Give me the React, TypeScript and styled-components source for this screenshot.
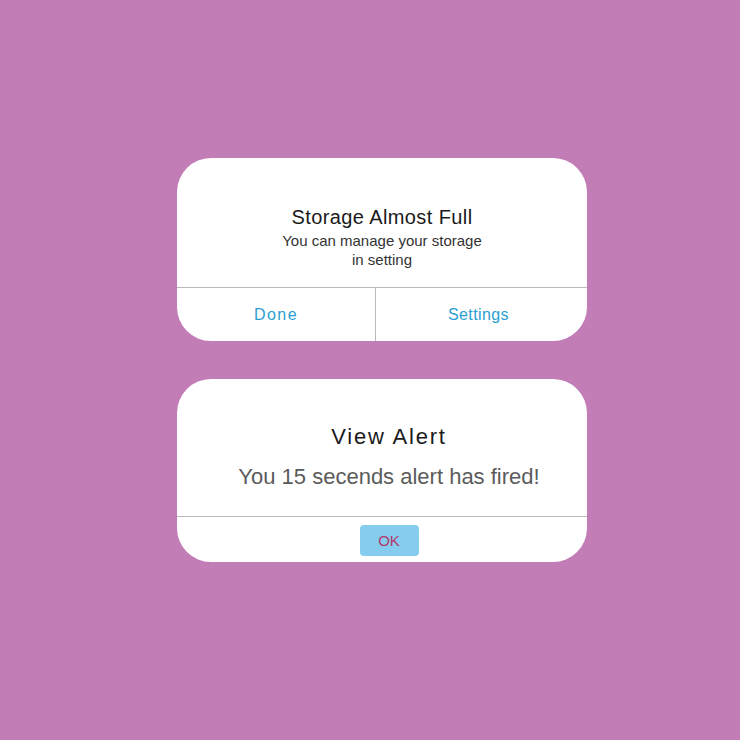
import styled, { createGlobalStyle } from "styled-components"

const GlobalStyle = createGlobalStyle`
  html, body {
    margin: 0;
    padding: 0;
    background: #c27db7;
  }
  body {
    font-family: "Liberation Sans", Arial, sans-serif;
  }
`

const Page = styled.div`
  width: 740px;
  height: 740px;
  box-sizing: border-box;
  padding-top: 158px;
  padding-left: 177px;
  display: flex;
  flex-direction: column;
  gap: 38px;
  background: #c27db7;
`

const Card = styled.div<{ $height: number }>`
  width: 410px;
  height: ${(props) => props.$height}px;
  background: #ffffff;
  border-radius: 34px;
  overflow: hidden;
  display: flex;
  flex-direction: column;
`

const Body = styled.div<{ $height: number; $pad: number; $shift?: number }>`
  height: ${(props) => props.$height}px;
  box-sizing: border-box;
  padding-top: ${(props) => props.$pad}px;
  padding-left: ${(props) => props.$shift ?? 0}px;
  border-bottom: 1px solid #b9b9b9;
  display: flex;
  flex-direction: column;
  align-items: center;
  text-align: center;
`

const Title = styled.div<{ $size: number; $spacing: number }>`
  font-size: ${(props) => props.$size}px;
  letter-spacing: ${(props) => props.$spacing}px;
  color: #1a1a1a;
  line-height: 1.2;
`

const Message = styled.div<{ $size: number; $gap: number }>`
  margin-top: ${(props) => props.$gap}px;
  font-size: ${(props) => props.$size}px;
  color: ${(props) => (props.$size > 18 ? "#5b5b5b" : "#333333")};
  line-height: 1.25;
`

const ActionRow = styled.div`
  flex: 1;
  display: grid;
  grid-template-columns: 199px 1fr;
`

const Action = styled.button<{ $divider?: boolean; $spacing: number; $shift?: number }>`
  border: none;
  background: transparent;
  font-family: inherit;
  font-size: 16px;
  letter-spacing: ${(props) => props.$spacing}px;
  color: #2b9fd1;
  padding: 0 ${(props) => props.$shift ?? 0}px 0 0;
  border-right: ${(props) => (props.$divider ? "1px solid #b9b9b9" : "none")};
`

const Footer = styled.div`
  flex: 1;
  display: flex;
  justify-content: center;
  align-items: center;
  padding-top: 2px;
  padding-left: 14px;
`

const OkButton = styled.button`
  width: 59px;
  height: 31px;
  border: none;
  border-radius: 4px;
  background: #86ccee;
  color: #b23a6a;
  font-family: inherit;
  font-size: 15px;
  padding: 0;
`

export default function App() {
  return (
    <>
      <GlobalStyle />
      <Page>
        <Card $height={183}>
          <Body $height={130} $pad={47}>
            <Title $size={20} $spacing={0.4}>
              Storage Almost Full
            </Title>
            <Message $size={15} $gap={3}>
              You can manage your storage
              <br />
              in setting
            </Message>
          </Body>
          <ActionRow>
            <Action $divider $spacing={1.5}>
              Done
            </Action>
            <Action $spacing={0.4} $shift={6}>
              Settings
            </Action>
          </ActionRow>
        </Card>
        <Card $height={183}>
          <Body $height={138} $pad={45} $shift={14}>
            <Title $size={22} $spacing={1.8}>
              View Alert
            </Title>
            <Message $size={22} $gap={13}>
              You 15 secends alert has fired!
            </Message>
          </Body>
          <Footer>
            <OkButton>OK</OkButton>
          </Footer>
        </Card>
      </Page>
    </>
  )
}
